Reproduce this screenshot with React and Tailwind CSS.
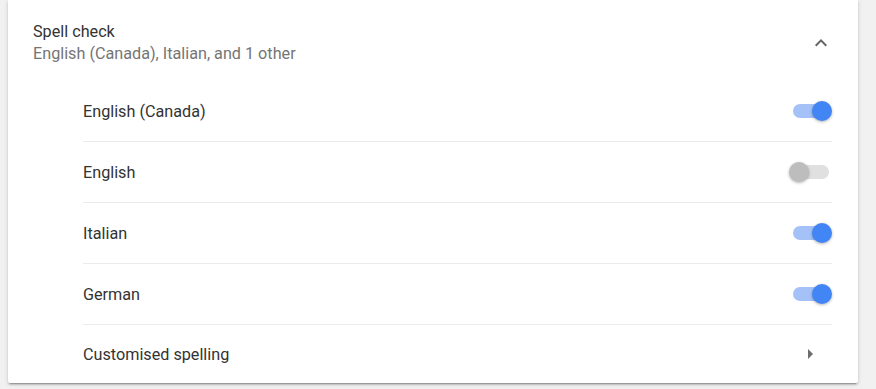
import React from 'react';

const languages = [
  { name: 'English (Canada)', on: true },
  { name: 'English', on: false },
  { name: 'Italian', on: true },
  { name: 'German', on: true },
];

const Toggle = ({ on }) => (
  <div className={`relative mr-[3px] h-[14px] w-[36px] rounded-full ${on ? 'bg-[#a4c2f7]' : 'bg-[#e0e0e0]'}`}>
    <div
      className={`absolute top-[-3px] h-[20px] w-[20px] rounded-full shadow-[0_1px_3px_rgba(0,0,0,0.3)] ${
        on ? 'right-[-3px] bg-[#4285f4]' : 'left-[-4px] bg-[#bdbdbd]'
      }`}
    />
  </div>
);

const App = () => {
  return (
    <div className="h-[389px] w-[876px] overflow-hidden bg-[#f1f1f1] font-['Roboto',sans-serif] text-[16.2px] leading-[21px]">
      <div className="ml-[8px] w-[850px] rounded-b-[2px] bg-white shadow-[0_2px_2px_0_rgba(0,0,0,0.14),0_1px_5px_0_rgba(0,0,0,0.12),0_3px_1px_-2px_rgba(0,0,0,0.2)]">
        {/* header */}
        <div className="flex items-center justify-between pb-[17px] pl-[25px] pr-[25px] pt-[21px]">
          <div>
            <div className="text-[#333333]">Spell check</div>
            <div className="mt-[1px] text-[#757575]">English (Canada), Italian, and 1 other</div>
          </div>
          <svg width="24" height="24" viewBox="0 0 24 24">
            <path d="M12 8l-6 6 1.41 1.41L12 10.83l4.59 4.58L18 14z" fill="#646464" />
          </svg>
        </div>

        {/* language list */}
        <div className="ml-[75px] mr-[26px]">
          {languages.map((lang) => (
            <div
              key={lang.name}
              className="flex h-[61px] items-center justify-between border-b border-[#ebebeb] text-[#333333]"
            >
              <span>{lang.name}</span>
              <Toggle on={lang.on} />
            </div>
          ))}
          <div className="flex h-[58px] items-center justify-between text-[#333333]">
            <span>Customised spelling</span>
            <svg width="24" height="24" viewBox="0 0 24 24" className="mr-[10px]">
              <path d="M10 17l5-5-5-5v10z" fill="#6e6e6e" />
            </svg>
          </div>
        </div>
      </div>
    </div>
  );
};

export default App;
